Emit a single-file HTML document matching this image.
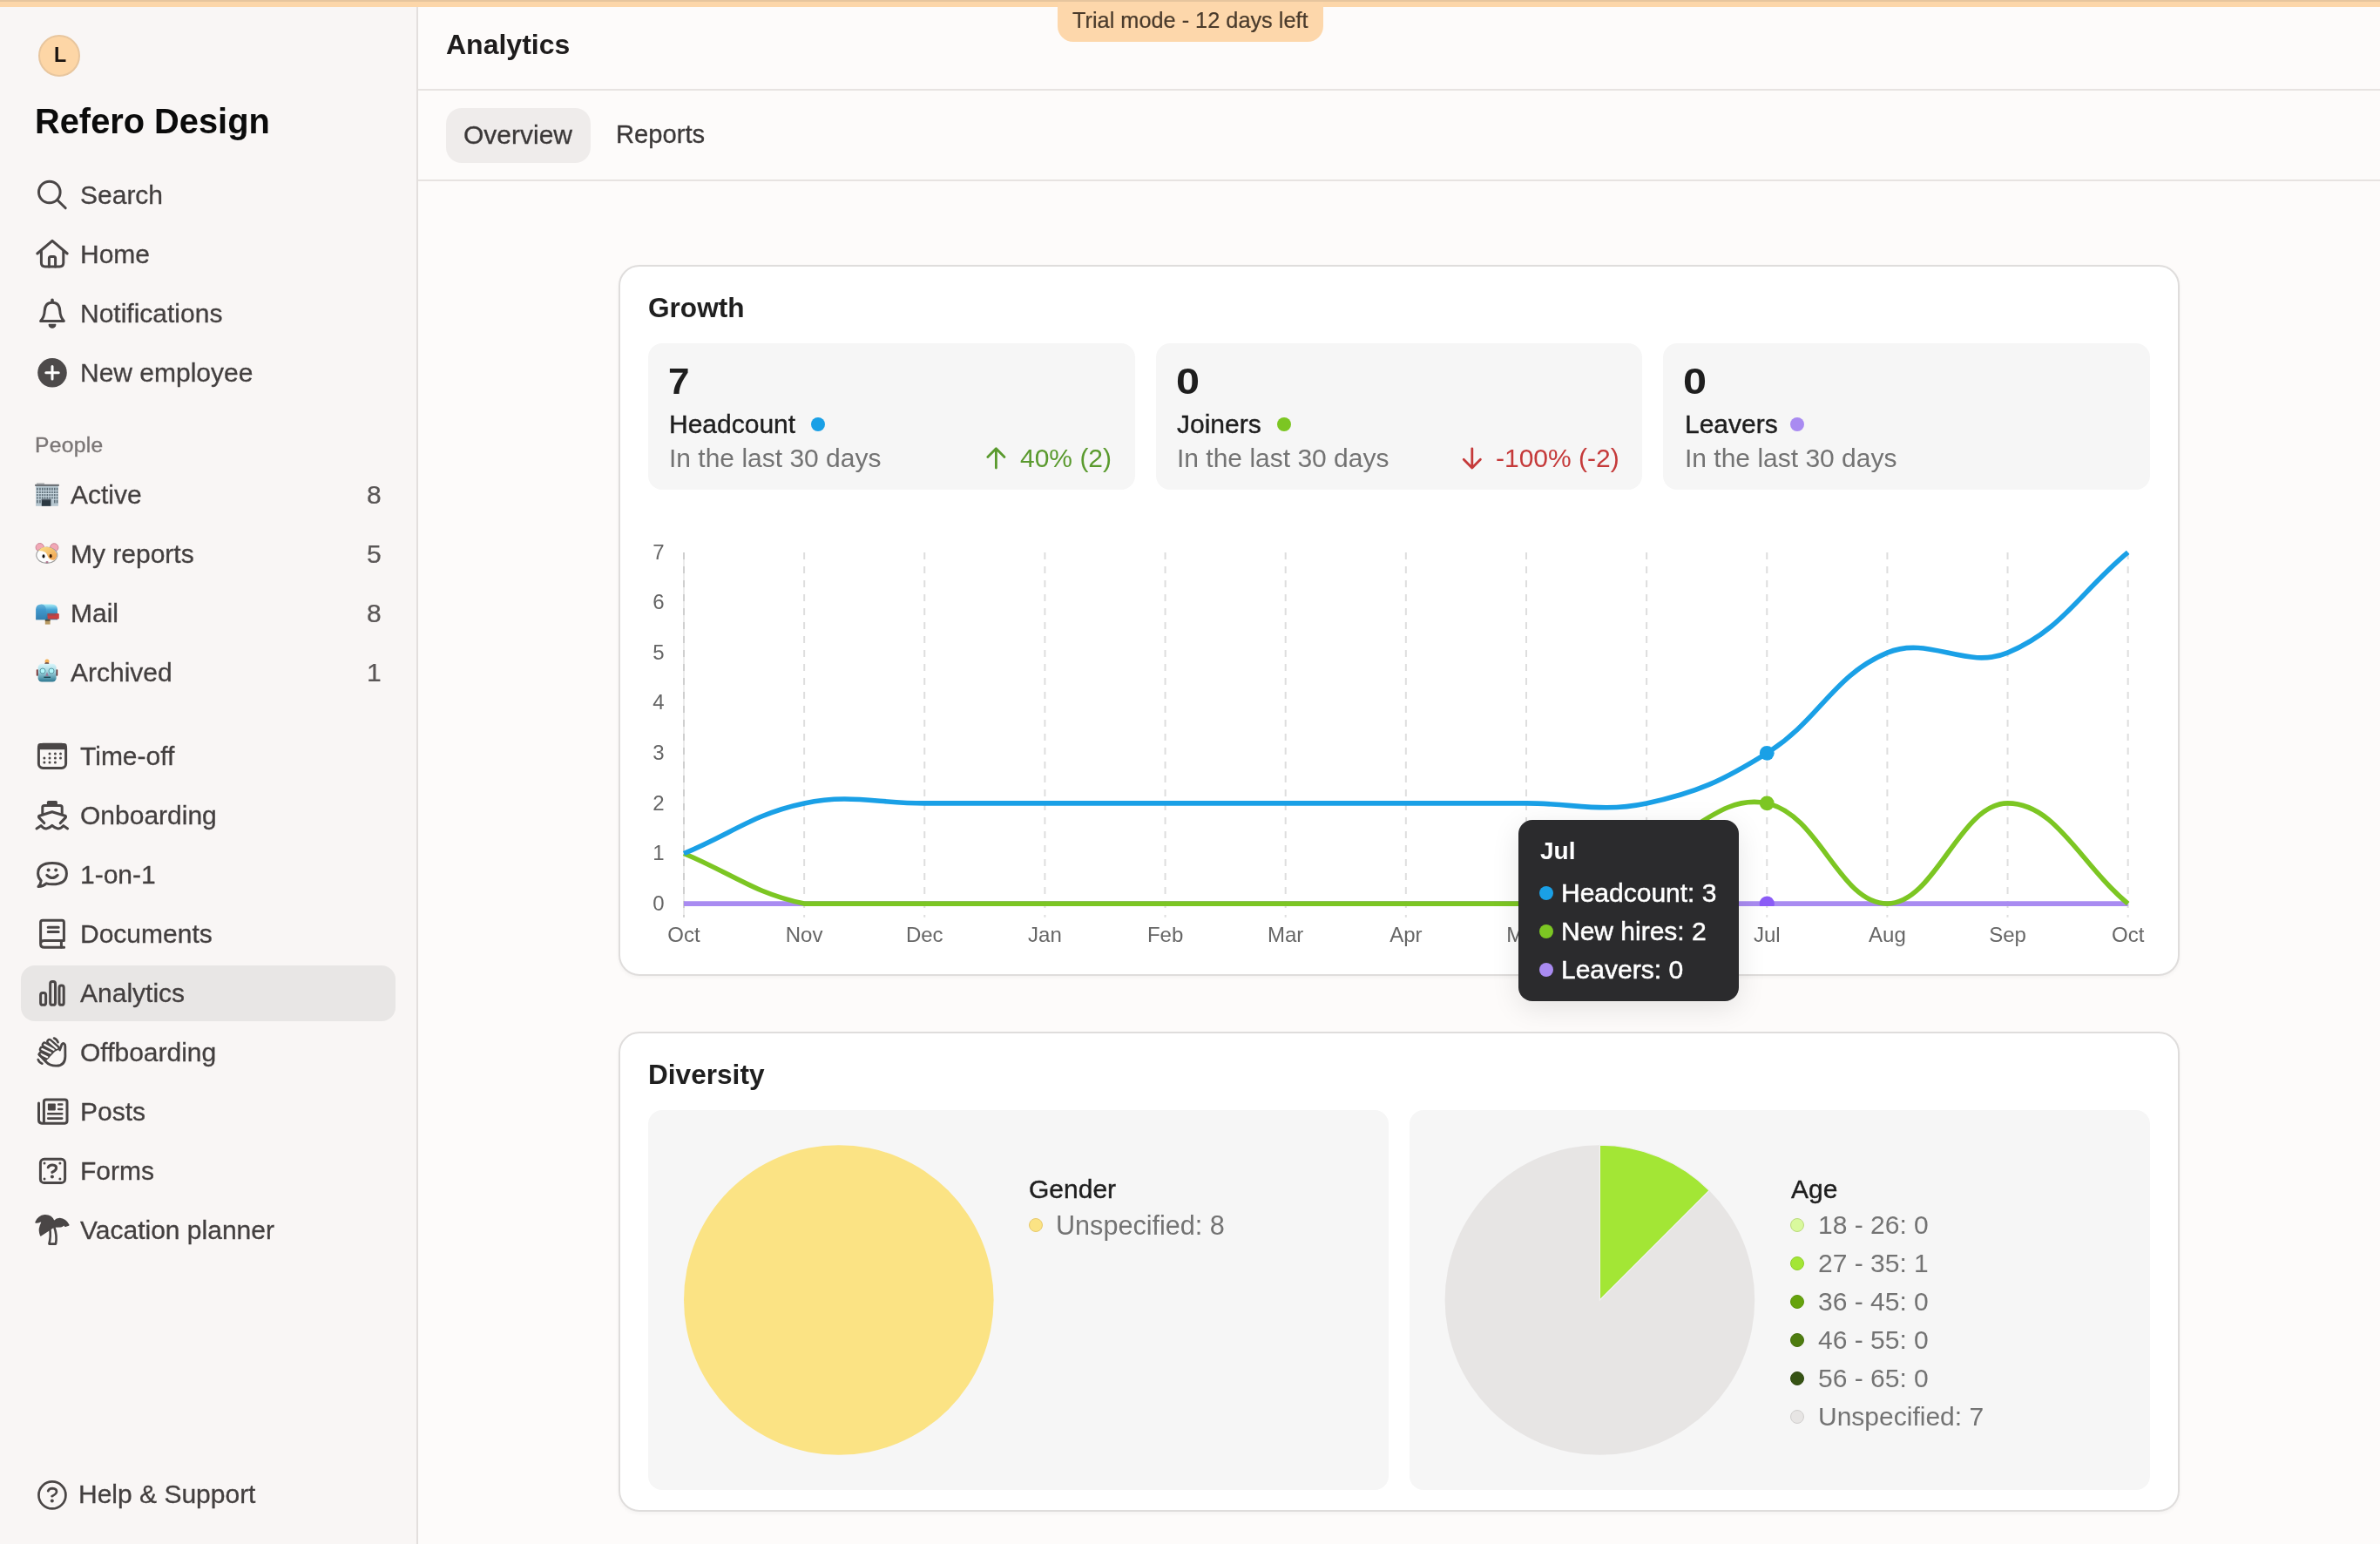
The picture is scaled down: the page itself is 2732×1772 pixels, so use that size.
<!DOCTYPE html>
<html><head><meta charset="utf-8"><title>Analytics</title>
<style>
@media (min-width:1800px){html{zoom:2;}}
*{box-sizing:border-box;margin:0;padding:0;}
body{width:1366px;height:886px;overflow:hidden;position:relative;background:#fdfbfa;font-family:"Liberation Sans", sans-serif;}
.t{position:absolute;white-space:nowrap;line-height:1;will-change:transform;}
.abs{position:absolute;}
</style></head><body>

<div class="abs" style="left:0;top:0;width:239px;height:886px;background:#f9f6f5;"></div>
<div class="abs" style="left:239px;top:0;width:1px;height:886px;background:#e3dfdd;"></div>
<div class="abs" style="left:12px;top:554px;width:215px;height:32px;background:#e8e6e5;border-radius:8px;"></div>
<div class="abs" style="left:22px;top:20px;width:24px;height:24px;border-radius:50%;background:#fdd6a6;border:1px solid #e8c69e;"></div>
<div class="t" style="left:30.90px;top:26.18px;font-size:11.6px;color:#1a1410;font-weight:700;">L</div>
<div class="t" style="left:19.80px;top:60.15px;font-size:19.9px;color:#0b0b0b;font-weight:700;">Refero Design</div>
<div class="t" style="left:45.80px;top:104.70px;font-size:15px;color:#433f3f;font-weight:400;-webkit-text-stroke:0.15px #433f3f;">Search</div>
<div class="t" style="left:45.80px;top:138.70px;font-size:15px;color:#433f3f;font-weight:400;-webkit-text-stroke:0.15px #433f3f;">Home</div>
<div class="t" style="left:45.80px;top:172.70px;font-size:15px;color:#433f3f;font-weight:400;-webkit-text-stroke:0.15px #433f3f;">Notifications</div>
<div class="t" style="left:45.80px;top:206.70px;font-size:15px;color:#433f3f;font-weight:400;-webkit-text-stroke:0.15px #433f3f;">New employee</div>
<div class="t" style="left:20.00px;top:249.34px;font-size:12.3px;color:#7b7676;font-weight:400;letter-spacing:0.15px;-webkit-text-stroke:0.2px #7b7676;">People</div>
<div class="t" style="left:40.30px;top:276.50px;font-size:15px;color:#433f3f;font-weight:400;-webkit-text-stroke:0.15px #433f3f;">Active</div>
<div class="t" style="right:1147.40px;top:276.50px;font-size:15px;color:#5a5656;font-weight:400;-webkit-text-stroke:0.12px #5a5656;">8</div>
<div class="t" style="left:40.30px;top:310.50px;font-size:15px;color:#433f3f;font-weight:400;-webkit-text-stroke:0.15px #433f3f;">My reports</div>
<div class="t" style="right:1147.40px;top:310.50px;font-size:15px;color:#5a5656;font-weight:400;-webkit-text-stroke:0.12px #5a5656;">5</div>
<div class="t" style="left:40.30px;top:344.50px;font-size:15px;color:#433f3f;font-weight:400;-webkit-text-stroke:0.15px #433f3f;">Mail</div>
<div class="t" style="right:1147.40px;top:344.50px;font-size:15px;color:#5a5656;font-weight:400;-webkit-text-stroke:0.12px #5a5656;">8</div>
<div class="t" style="left:40.30px;top:378.50px;font-size:15px;color:#433f3f;font-weight:400;-webkit-text-stroke:0.15px #433f3f;">Archived</div>
<div class="t" style="right:1147.40px;top:378.50px;font-size:15px;color:#5a5656;font-weight:400;-webkit-text-stroke:0.12px #5a5656;">1</div>
<div class="t" style="left:45.80px;top:426.60px;font-size:15px;color:#433f3f;font-weight:400;-webkit-text-stroke:0.15px #433f3f;">Time-off</div>
<div class="t" style="left:45.80px;top:460.60px;font-size:15px;color:#433f3f;font-weight:400;-webkit-text-stroke:0.15px #433f3f;">Onboarding</div>
<div class="t" style="left:45.80px;top:494.60px;font-size:15px;color:#433f3f;font-weight:400;-webkit-text-stroke:0.15px #433f3f;">1-on-1</div>
<div class="t" style="left:45.80px;top:528.60px;font-size:15px;color:#433f3f;font-weight:400;-webkit-text-stroke:0.15px #433f3f;">Documents</div>
<div class="t" style="left:45.80px;top:562.60px;font-size:15px;color:#433f3f;font-weight:400;-webkit-text-stroke:0.15px #433f3f;">Analytics</div>
<div class="t" style="left:45.80px;top:596.60px;font-size:15px;color:#433f3f;font-weight:400;-webkit-text-stroke:0.15px #433f3f;">Offboarding</div>
<div class="t" style="left:45.80px;top:630.60px;font-size:15px;color:#433f3f;font-weight:400;-webkit-text-stroke:0.15px #433f3f;">Posts</div>
<div class="t" style="left:45.80px;top:664.60px;font-size:15px;color:#433f3f;font-weight:400;-webkit-text-stroke:0.15px #433f3f;">Forms</div>
<div class="t" style="left:45.80px;top:698.60px;font-size:15px;color:#433f3f;font-weight:400;-webkit-text-stroke:0.15px #433f3f;">Vacation planner</div>
<div class="t" style="left:45.20px;top:850.20px;font-size:15px;color:#433f3f;font-weight:400;-webkit-text-stroke:0.15px #433f3f;">Help &amp; Support</div>
<svg class="abs" style="left:0;top:0" width="240" height="886" viewBox="0 0 240 886" fill="none" stroke="#4a4646" stroke-width="1.5" stroke-linecap="round" stroke-linejoin="round">
<!-- search -->
<circle cx="28.4" cy="110.25" r="6.15"/><path d="M33.0 114.9 L37.6 119.4"/>
<!-- home -->
<path d="M21.4 145.5 L30 138.2 L38.6 145.5"/>
<path d="M23.7 144.2 V150.8 Q23.7 153 25.9 153 H34.2 Q36.4 153 36.4 150.8 V144.2"/>
<path d="M28.2 153 V148.2 Q28.2 147.2 29.2 147.2 H30.8 Q31.8 147.2 31.8 148.2 V153"/>
<!-- bell -->
<path d="M23.3 184.2 Q25.5 181.8 25.6 178.5 Q25.8 173.6 30 173.6 Q34.2 173.6 34.4 178.5 Q34.5 181.8 36.7 184.2 Z"/>
<path d="M30 172.9 V172.1" stroke-width="1.8"/>
<path d="M28.1 186.2 A1.9 1.9 0 0 0 31.9 186.2 Z" fill="#4a4646" stroke-width="0.6"/>
<!-- new employee -->
<circle cx="30" cy="213.9" r="8.4" fill="#4d4a4a" stroke="none"/>
<path d="M26.4 213.9 H33.6 M30 210.3 V217.5" stroke="#fff" stroke-width="1.5"/>
<!-- time-off calendar -->
<rect x="22.2" y="427.1" width="15.6" height="13.6" rx="2.4"/>
<rect x="21.6" y="426.5" width="16.8" height="3.6" rx="1.6" fill="#4a4646" stroke="none"/>
<g fill="#4a4646" stroke="none">
<circle cx="28.5" cy="432.45" r="0.75"/><circle cx="31.7" cy="432.45" r="0.75"/><circle cx="34.75" cy="432.45" r="0.75"/>
<circle cx="25.45" cy="434.95" r="0.75"/><circle cx="28.5" cy="434.95" r="0.75"/><circle cx="31.7" cy="434.95" r="0.75"/><circle cx="34.75" cy="434.95" r="0.75"/>
<circle cx="25.45" cy="437.45" r="0.75"/><circle cx="28.5" cy="437.45" r="0.75"/><circle cx="31.7" cy="437.45" r="0.75"/>
</g>
<!-- onboarding ship -->
<rect x="26.95" y="459.5" width="6" height="3.1" rx="0.8" fill="#4a4646" stroke="none"/>
<path d="M24.4 466.8 V463.4 Q24.4 462.3 25.5 462.3 H34.5 Q35.6 462.3 35.6 463.4 V466.8"/>
<path d="M25.4 472.3 L22.4 469.2 Q21.9 468.5 22.7 468.1 L29.9 465.9 L37.3 468.1 Q38.1 468.5 37.6 469.2 L34.6 472.3"/>
<path d="M21.0 475.5 L23.6 473.8 Q25.0 475.6 26.6 475.5 Q28.3 475.3 29.9 473.7 Q31.5 475.3 33.2 475.5 Q34.9 475.6 36.4 473.8 L38.8 475.5"/>
<!-- 1-on-1 -->
<path d="M23.6 505.3 Q21.8 503.6 21.8 501.2 Q21.8 495.2 30 495.2 Q38.2 495.2 38.2 501.2 Q38.2 507.4 30 507.4 Q27.9 507.4 26.6 506.9 Q24.8 508.6 22.0 508.8 Q23.4 507.3 23.6 505.3 Z"/>
<circle cx="27.8" cy="499.3" r="1" fill="#4a4646" stroke="none"/><circle cx="32.1" cy="499.3" r="1" fill="#4a4646" stroke="none"/>
<path d="M26.9 502.2 Q30 505.4 33.1 502.2"/>
<!-- documents -->
<path d="M23.3 541.5 V529.3 Q23.3 528.1 24.5 528.1 H35.6 Q36.7 528.1 36.7 529.3 V539.7 H25.4 Q23.3 539.7 23.3 541.6 Q23.3 543.6 25.4 543.6 H36.8"/>
<path d="M35.2 539.8 V543.5"/>
<path d="M27.6 532.1 H33.6 M27.6 534.8 H33.6" stroke-width="1.5"/>
<!-- analytics bars -->
<rect x="23.3" y="569.75" width="3.0" height="6.9" rx="1.2"/>
<rect x="28.85" y="563.3" width="2.9" height="13.35" rx="1.2"/>
<rect x="34.0" y="565.55" width="2.6" height="11.1" rx="1.2"/>
<!-- offboarding hand -->
<g stroke-width="3.5">
<path d="M28.36 597.68 L32.9 601.7"/><path d="M25.61 599.46 L30.9 602.5"/><path d="M24.15 602.05 L29.1 604.3"/><path d="M23.67 604.97 L27.2 606.8"/>
</g>
<path d="M33.9 602.3 L31.6 603.4 L29.8 605.2 L27.9 607.4 L26.6 608.6 Q29.0 610.9 32.5 610.9 Q36.6 610.6 36.7 605.8 L36.6 600.2 Q36.4 599.3 35.9 599.6 L34.7 602.4 Z" fill="#f9f6f5" stroke="none"/>
<g stroke="#f9f6f5" stroke-width="1.1">
<path d="M28.36 597.68 L32.6 601.45"/><path d="M25.61 599.46 L30.8 602.4"/><path d="M24.15 602.05 L29.0 604.2"/><path d="M23.67 604.97 L27.1 606.6"/>
</g>
<path d="M34.3 602.5 L35.5 599.3 Q36.1 598.5 36.8 598.9 Q37.4 599.3 37.4 600.2 L37.45 606.1 Q37.4 611.5 32.4 611.6 Q28.6 611.7 26.2 609.1 L22.4 605.0" stroke-width="1.4"/>
<path d="M31.0 595.75 Q32.6 596.3 33.3 598.1" stroke-width="1.3"/>
<path d="M21.85 608.0 Q22.6 609.8 24.2 610.35" stroke-width="1.3"/>
<!-- posts -->
<path d="M25.2 644.0 V632.3 Q25.2 631.0 26.5 631.0 H37.2 Q38.5 631.0 38.5 632.3 V643.3 Q38.5 644.6 37.2 644.6 H24.0 Q22.25 644.6 22.25 642.8 V633.0"/>
<rect x="27.45" y="633.3" width="4.45" height="3.9" rx="0.4" fill="#4a4646" stroke="none"/>
<path d="M33.6 633.75 H35.6 M33.6 636.5 H35.6 M27.6 639.15 H35.6 M27.6 641.8 H35.6" stroke-width="1.3"/>
<!-- forms -->
<rect x="23.2" y="665.1" width="14.1" height="13.7" rx="2.2"/>
<g fill="#4a4646" stroke="none"><circle cx="25.5" cy="667.5" r="0.75"/><circle cx="34.45" cy="667.5" r="0.75"/><circle cx="25.5" cy="676.45" r="0.75"/><circle cx="34.45" cy="676.45" r="0.75"/><circle cx="29.95" cy="675.3" r="1.0"/></g>
<path d="M27.6 669.9 Q28.3 668.4 30.2 668.5 Q32.4 668.7 32.3 670.3 Q32.2 671.6 29.9 672.7"/>
<!-- vacation palm -->
<path d="M20.6 701.4 Q22.2 697.8 25.6 697.5 Q29.4 697.3 31.0 700.9 Q32.6 699.3 34.3 699.3 Q37.6 699.6 39.35 702.9 L37.45 703.6 Q37.0 702.6 36.5 702.8 Q35.8 703.6 34.9 703.8 L31.0 703.9 L23.4 708.9 Q22.3 706.0 23.2 703.6 Q23.7 702.4 24.2 701.2 Q23.6 700.6 22.9 701.0 Q21.8 701.5 20.6 701.4 Z" fill="#4a4646" stroke-width="0.9"/>
<path d="M28.6 704.4 Q29.3 709.6 28.2 713.8 H32.0 Q32.9 709.0 31.1 704.0" stroke-width="1.3"/>
<!-- help -->
<circle cx="29.97" cy="857.97" r="7.75" stroke-width="1.35"/>
<path d="M27.6 855.6 Q28.1 854.1 30.1 854.1 Q32.5 854.2 32.5 856.0 Q32.4 857.3 29.8 858.6" stroke-width="1.35"/>
<circle cx="29.9" cy="861.2" r="1.0" fill="#4a4646" stroke="none"/>
</svg>
<svg class="abs" style="left:0;top:0" width="240" height="886" viewBox="0 0 240 886">
<defs>
<linearGradient id="gmb" x1="0" y1="0" x2="0" y2="1"><stop offset="0" stop-color="#a9eef8"/><stop offset="0.35" stop-color="#49a6d6"/><stop offset="1" stop-color="#2a6f98"/></linearGradient>
<linearGradient id="grb" x1="0" y1="0" x2="0" y2="1"><stop offset="0" stop-color="#d9f7fc"/><stop offset="0.45" stop-color="#9fd3de"/><stop offset="1" stop-color="#2c7790"/></linearGradient>
<linearGradient id="gham" x1="0" y1="0" x2="1" y2="1"><stop offset="0" stop-color="#fbe08a"/><stop offset="1" stop-color="#f0a050"/></linearGradient>
</defs>
<!-- building -->
<rect x="20.55" y="278.6" width="12.9" height="11.8" fill="#b6c6cf"/>
<rect x="20.1" y="277.9" width="13.8" height="1.1" fill="#6f7377"/>
<rect x="21.0" y="277.2" width="4.5" height="0.8" fill="#a9abad"/>
<g fill="#5d6d77">
<rect x="21.1" y="279.9" width="0.75" height="8.8"/><rect x="22.6" y="279.9" width="0.75" height="8.8"/><rect x="24.0" y="279.9" width="0.75" height="6.5"/><rect x="25.4" y="279.9" width="0.75" height="6.5"/><rect x="26.8" y="279.9" width="0.75" height="6.5"/><rect x="28.2" y="279.9" width="0.75" height="6.5"/><rect x="29.6" y="279.9" width="0.75" height="6.5"/><rect x="31.0" y="279.9" width="0.75" height="8.8"/><rect x="32.4" y="279.9" width="0.75" height="8.8"/>
</g>
<g fill="#c9d8e0"><rect x="20.6" y="281.4" width="12.8" height="0.55"/><rect x="20.6" y="283.0" width="12.8" height="0.55"/><rect x="20.6" y="284.6" width="12.8" height="0.55"/><rect x="20.6" y="286.3" width="12.8" height="0.55"/></g>
<rect x="23.9" y="286.4" width="5.3" height="4.0" fill="#2b3841"/>
<rect x="23.9" y="286.4" width="5.3" height="0.7" fill="#55606a"/>
<!-- hamster -->
<circle cx="22.9" cy="314.1" r="2.35" fill="#f2a8b6" stroke="#c98595" stroke-width="0.5"/>
<circle cx="31.1" cy="314.2" r="2.35" fill="#f2a8b6" stroke="#c98595" stroke-width="0.5"/>
<ellipse cx="26.9" cy="318.6" rx="6.0" ry="4.6" fill="#fdfdfd" stroke="#9a9a9a" stroke-width="0.55"/>
<path d="M22.0 316.0 Q24.0 313.6 27.0 313.9 Q31.2 314.2 32.6 317.9 Q32.6 320.6 31.0 321.4 Q28.2 321.6 27.3 319.0 Q26.6 316.8 24.4 316.3 Z" fill="url(#gham)"/>
<ellipse cx="25.0" cy="319.2" rx="0.75" ry="1.05" fill="#111"/>
<ellipse cx="29.1" cy="319.1" rx="0.75" ry="1.05" fill="#3a1a05"/>
<ellipse cx="27.0" cy="322.6" rx="0.8" ry="0.55" fill="#b07890"/>
<!-- mailbox -->
<path d="M20.6 355.6 V349.8 Q20.6 346.7 23.8 346.7 H29.6 Q33.0 346.7 33.0 349.8 V355.6 Z" fill="url(#gmb)"/>
<path d="M20.6 355.6 V349.8 Q20.6 346.7 23.8 346.7 Q26.4 346.9 26.4 350.2 V355.6 Z" fill="#3a8dc4" opacity="0.55"/>
<rect x="27.3" y="352.0" width="6.6" height="3.2" rx="0.6" fill="#c94040"/>
<rect x="27.3" y="352.0" width="4.6" height="1.3" fill="#9a4a55"/>
<rect x="25.9" y="355.6" width="2.9" height="2.7" fill="#b99a62"/>
<rect x="25.9" y="355.6" width="2.9" height="0.7" fill="#3c3a2e"/>
<!-- robot -->
<circle cx="27.0" cy="379.5" r="1.25" fill="#f3b25a"/>
<ellipse cx="26.9" cy="380.7" rx="1.3" ry="0.6" fill="#5a3c3c"/>
<rect x="20.9" y="384.1" width="1.1" height="3.8" rx="0.4" fill="#7a2f2f"/>
<rect x="32.0" y="384.1" width="1.1" height="3.8" rx="0.4" fill="#6a2a2a"/>
<rect x="21.8" y="380.9" width="10.5" height="10.4" rx="2.2" fill="url(#grb)"/>
<circle cx="24.5" cy="385.0" r="1.5" fill="#b2f6fb" stroke="#5a9aa4" stroke-width="0.5"/>
<circle cx="29.5" cy="385.0" r="1.5" fill="#b2f6fb" stroke="#5a9aa4" stroke-width="0.5"/>
<path d="M27.0 385.6 L26.1 388.0 H27.9 Z" fill="#9a7d98"/>
<rect x="25.2" y="388.3" width="3.8" height="0.7" fill="#1f4a55"/>
</svg>
<div class="abs" style="left:240px;top:51px;width:1126px;height:1px;background:#e7e3e1;"></div>
<div class="abs" style="left:240px;top:103px;width:1126px;height:1px;background:#e7e3e1;"></div>
<div class="t" style="left:256.00px;top:17.36px;font-size:16px;color:#1e1c1c;font-weight:700;">Analytics</div>
<div class="abs" style="left:256px;top:61.8px;width:83.2px;height:31.5px;background:#efeceb;border-radius:9px;"></div>
<div class="t" style="left:266.00px;top:69.80px;font-size:15px;color:#3b3838;font-weight:400;-webkit-text-stroke:0.15px #3b3838;">Overview</div>
<div class="t" style="left:353.60px;top:70.14px;font-size:14.6px;color:#3b3838;font-weight:400;-webkit-text-stroke:0.15px #3b3838;">Reports</div>
<div class="abs" style="left:0;top:0;width:1366px;height:4px;background:#fcd6a9;border-top:1px solid #e6c59e;"></div>
<div class="abs" style="left:606.8px;top:0;width:152.7px;height:24px;background:#fdd7ab;border-radius:0 0 9px 9px;"></div>
<div class="abs" style="left:0;top:0;width:1366px;height:1px;background:#e6c59e;"></div>
<div class="t" style="left:615.30px;top:5.33px;font-size:12.66px;color:#4a3b2c;font-weight:400;-webkit-text-stroke:0.12px #4a3b2c;">Trial mode - 12 days left</div>
<div class="abs" style="left:355px;top:151.8px;width:896px;height:408.4px;background:#fff;border:1px solid #dfdddc;border-radius:12px;box-shadow:0 1px 2px rgba(0,0,0,0.04);"></div>
<div class="t" style="left:372.20px;top:169.03px;font-size:15.8px;color:#1f1f1f;font-weight:700;">Growth</div>
<div class="abs" style="left:372.00px;top:197.2px;width:279.33px;height:84px;background:#f6f6f6;border-radius:8px;"></div>
<div class="t" style="left:383.50px;top:208.39px;font-size:20.8px;color:#1e1e1e;font-weight:700;transform:scaleX(1.06);transform-origin:0 0;">7</div>
<div class="t" style="left:384.20px;top:235.80px;font-size:15px;color:#1e1e1e;-webkit-text-stroke:0.2px #1e1e1e;">Headcount</div>
<div class="abs" style="left:465.50px;top:239.6px;width:8px;height:8px;border-radius:50%;background:#1aa0e6;"></div>
<div class="t" style="left:384.20px;top:255.30px;font-size:15px;color:#737373;font-weight:400;">In the last 30 days</div>
<div class="t" style="right:728.07px;top:255.30px;font-size:15px;color:#5a9a2e;font-weight:400;">40% (2)</div>
<div class="abs" style="left:663.33px;top:197.2px;width:279.33px;height:84px;background:#f6f6f6;border-radius:8px;"></div>
<div class="t" style="left:674.83px;top:208.39px;font-size:20.8px;color:#1e1e1e;font-weight:700;transform:scaleX(1.17);transform-origin:0 0;">0</div>
<div class="t" style="left:675.53px;top:235.80px;font-size:15px;color:#1e1e1e;-webkit-text-stroke:0.2px #1e1e1e;">Joiners</div>
<div class="abs" style="left:733.00px;top:239.6px;width:8px;height:8px;border-radius:50%;background:#7cc623;"></div>
<div class="t" style="left:675.53px;top:255.30px;font-size:15px;color:#737373;font-weight:400;">In the last 30 days</div>
<div class="t" style="right:436.73px;top:255.30px;font-size:15px;color:#c53a3a;font-weight:400;">-100% (-2)</div>
<div class="abs" style="left:954.67px;top:197.2px;width:279.33px;height:84px;background:#f6f6f6;border-radius:8px;"></div>
<div class="t" style="left:966.17px;top:208.39px;font-size:20.8px;color:#1e1e1e;font-weight:700;transform:scaleX(1.17);transform-origin:0 0;">0</div>
<div class="t" style="left:966.87px;top:235.80px;font-size:15px;color:#1e1e1e;-webkit-text-stroke:0.2px #1e1e1e;">Leavers</div>
<div class="abs" style="left:1027.40px;top:239.6px;width:8px;height:8px;border-radius:50%;background:#a98bf1;"></div>
<div class="t" style="left:966.87px;top:255.30px;font-size:15px;color:#737373;font-weight:400;">In the last 30 days</div>
<svg class="abs" style="left:0;top:0" width="1366" height="886" viewBox="0 0 1366 886" fill="none" stroke-linecap="round" stroke-linejoin="round"><path d="M571.7 268.5 V257.6 M566.9 262.3 L571.7 257.4 L576.5 262.3" stroke="#5a9a2e" stroke-width="1.4"/><path d="M844.9 257.4 V268.3 M840.1 263.6 L844.9 268.5 L849.7 263.6" stroke="#c53a3a" stroke-width="1.4"/></svg>
<svg class="abs" style="left:0;top:0" width="1366" height="886" viewBox="0 0 1366 886"><line x1="392.50" y1="317" x2="392.50" y2="526.4" stroke="#ebebeb" stroke-width="1"/><line x1="392.50" y1="317" x2="392.50" y2="526.4" stroke="#cfcfcf" stroke-width="1" stroke-dasharray="4 4"/><line x1="461.57" y1="317" x2="461.57" y2="526.4" stroke="#dedede" stroke-width="1" stroke-dasharray="4 4"/><line x1="530.64" y1="317" x2="530.64" y2="526.4" stroke="#dedede" stroke-width="1" stroke-dasharray="4 4"/><line x1="599.71" y1="317" x2="599.71" y2="526.4" stroke="#dedede" stroke-width="1" stroke-dasharray="4 4"/><line x1="668.78" y1="317" x2="668.78" y2="526.4" stroke="#dedede" stroke-width="1" stroke-dasharray="4 4"/><line x1="737.85" y1="317" x2="737.85" y2="526.4" stroke="#dedede" stroke-width="1" stroke-dasharray="4 4"/><line x1="806.92" y1="317" x2="806.92" y2="526.4" stroke="#dedede" stroke-width="1" stroke-dasharray="4 4"/><line x1="875.99" y1="317" x2="875.99" y2="526.4" stroke="#dedede" stroke-width="1" stroke-dasharray="4 4"/><line x1="945.06" y1="317" x2="945.06" y2="526.4" stroke="#dedede" stroke-width="1" stroke-dasharray="4 4"/><line x1="1014.13" y1="317" x2="1014.13" y2="526.4" stroke="#dedede" stroke-width="1" stroke-dasharray="4 4"/><line x1="1083.20" y1="317" x2="1083.20" y2="526.4" stroke="#dedede" stroke-width="1" stroke-dasharray="4 4"/><line x1="1152.27" y1="317" x2="1152.27" y2="526.4" stroke="#dedede" stroke-width="1" stroke-dasharray="4 4"/><line x1="1221.34" y1="317" x2="1221.34" y2="526.4" stroke="#dedede" stroke-width="1" stroke-dasharray="4 4"/><text x="381.3" y="522.40" text-anchor="end" font-size="12" fill="#666" font-family='"Liberation Sans", sans-serif'>0</text><text x="381.3" y="493.60" text-anchor="end" font-size="12" fill="#666" font-family='"Liberation Sans", sans-serif'>1</text><text x="381.3" y="464.80" text-anchor="end" font-size="12" fill="#666" font-family='"Liberation Sans", sans-serif'>2</text><text x="381.3" y="436.00" text-anchor="end" font-size="12" fill="#666" font-family='"Liberation Sans", sans-serif'>3</text><text x="381.3" y="407.20" text-anchor="end" font-size="12" fill="#666" font-family='"Liberation Sans", sans-serif'>4</text><text x="381.3" y="378.40" text-anchor="end" font-size="12" fill="#666" font-family='"Liberation Sans", sans-serif'>5</text><text x="381.3" y="349.60" text-anchor="end" font-size="12" fill="#666" font-family='"Liberation Sans", sans-serif'>6</text><text x="381.3" y="320.80" text-anchor="end" font-size="12" fill="#666" font-family='"Liberation Sans", sans-serif'>7</text><text x="392.50" y="540.4" text-anchor="middle" font-size="12" fill="#666" font-family='"Liberation Sans", sans-serif'>Oct</text><text x="461.57" y="540.4" text-anchor="middle" font-size="12" fill="#666" font-family='"Liberation Sans", sans-serif'>Nov</text><text x="530.64" y="540.4" text-anchor="middle" font-size="12" fill="#666" font-family='"Liberation Sans", sans-serif'>Dec</text><text x="599.71" y="540.4" text-anchor="middle" font-size="12" fill="#666" font-family='"Liberation Sans", sans-serif'>Jan</text><text x="668.78" y="540.4" text-anchor="middle" font-size="12" fill="#666" font-family='"Liberation Sans", sans-serif'>Feb</text><text x="737.85" y="540.4" text-anchor="middle" font-size="12" fill="#666" font-family='"Liberation Sans", sans-serif'>Mar</text><text x="806.92" y="540.4" text-anchor="middle" font-size="12" fill="#666" font-family='"Liberation Sans", sans-serif'>Apr</text><text x="875.99" y="540.4" text-anchor="middle" font-size="12" fill="#666" font-family='"Liberation Sans", sans-serif'>May</text><text x="945.06" y="540.4" text-anchor="middle" font-size="12" fill="#666" font-family='"Liberation Sans", sans-serif'>Jun</text><text x="1014.13" y="540.4" text-anchor="middle" font-size="12" fill="#666" font-family='"Liberation Sans", sans-serif'>Jul</text><text x="1083.20" y="540.4" text-anchor="middle" font-size="12" fill="#666" font-family='"Liberation Sans", sans-serif'>Aug</text><text x="1152.27" y="540.4" text-anchor="middle" font-size="12" fill="#666" font-family='"Liberation Sans", sans-serif'>Sep</text><text x="1221.34" y="540.4" text-anchor="middle" font-size="12" fill="#666" font-family='"Liberation Sans", sans-serif'>Oct</text><path d="M392.50,518.55 H1221.34" stroke="#a98bf1" stroke-width="2.8" fill="none"/><path d="M392.50,489.75C420.13,501.27 432.84,512.56 461.57,518.55C488.09,518.55 503.01,518.55 530.64,518.55C558.27,518.55 572.08,518.55 599.71,518.55C627.34,518.55 641.15,518.55 668.78,518.55C696.41,518.55 710.22,518.55 737.85,518.55C765.48,518.55 779.29,518.55 806.92,518.55C834.55,518.55 849.47,518.55 875.99,518.55C904.72,512.56 917.43,501.27 945.06,489.75C972.69,478.23 989.03,455.72 1014.13,460.95C1044.29,467.24 1055.57,518.55 1083.20,518.55C1110.83,518.55 1124.64,460.95 1152.27,460.95C1179.90,460.95 1193.71,495.51 1221.34,518.55" stroke="#7cc623" stroke-width="2.8" fill="none"/><path d="M392.50,489.75C420.13,478.23 432.84,466.94 461.57,460.95C488.09,455.42 503.01,460.95 530.64,460.95C558.27,460.95 572.08,460.95 599.71,460.95C627.34,460.95 641.15,460.95 668.78,460.95C696.41,460.95 710.22,460.95 737.85,460.95C765.48,460.95 779.29,460.95 806.92,460.95C834.55,460.95 848.36,460.95 875.99,460.95C903.62,460.95 918.54,466.48 945.06,460.95C973.79,454.96 989.03,447.85 1014.13,432.15C1044.29,413.29 1051.95,387.58 1083.20,374.55C1107.20,364.54 1128.27,384.56 1152.27,374.55C1183.52,361.52 1193.71,339.99 1221.34,316.95" stroke="#1aa0e6" stroke-width="2.8" fill="none"/><clipPath id="cp"><rect x="380" y="300" width="900" height="219.95"/></clipPath><circle cx="1014.13" cy="518.55" r="4.3" fill="#8b5cf6" clip-path="url(#cp)"/><circle cx="1014.13" cy="460.95" r="4.2" fill="#7cc623"/><circle cx="1014.13" cy="432.15" r="4.2" fill="#1aa0e6"/></svg>
<div class="abs" style="left:871.6px;top:470.7px;width:126.4px;height:103.7px;background:#2b2b2d;border-radius:8px;box-shadow:0 4px 16px rgba(0,0,0,0.10);"></div>
<div class="t" style="left:884.00px;top:481.65px;font-size:14px;color:#fff;font-weight:700;">Jul</div>
<div class="abs" style="left:883.5px;top:508.50px;width:8px;height:8px;border-radius:50%;background:#1aa0e6;"></div>
<div class="t" style="left:895.80px;top:504.80px;font-size:15px;color:#fff;font-weight:400;-webkit-text-stroke:0.25px #fff;">Headcount: 3</div>
<div class="abs" style="left:883.5px;top:530.50px;width:8px;height:8px;border-radius:50%;background:#7cc623;"></div>
<div class="t" style="left:895.80px;top:526.80px;font-size:15px;color:#fff;font-weight:400;-webkit-text-stroke:0.25px #fff;">New hires: 2</div>
<div class="abs" style="left:883.5px;top:552.50px;width:8px;height:8px;border-radius:50%;background:#a98bf1;"></div>
<div class="t" style="left:895.80px;top:548.80px;font-size:15px;color:#fff;font-weight:400;-webkit-text-stroke:0.25px #fff;">Leavers: 0</div>
<div class="abs" style="left:355px;top:592.0px;width:896px;height:275.5px;background:#fff;border:1px solid #dfdddc;border-radius:12px;box-shadow:0 1px 2px rgba(0,0,0,0.04);"></div>
<div class="t" style="left:372.20px;top:609.03px;font-size:15.8px;color:#1f1f1f;font-weight:700;">Diversity</div>
<div class="abs" style="left:372.00px;top:636.8px;width:425.00px;height:218.2px;background:#f6f6f6;border-radius:8px;"></div>
<div class="abs" style="left:809.00px;top:636.8px;width:425.00px;height:218.2px;background:#f6f6f6;border-radius:8px;"></div>
<svg class="abs" style="left:0;top:0" width="1366" height="886" viewBox="0 0 1366 886"><circle cx="481.4" cy="746.0" r="88.9" fill="#fbe384"/><circle cx="918.2" cy="746.0" r="88.9" fill="#e7e5e4"/><path d="M918.2,746.0 L918.2,657.1 A88.9,88.9 0 0 1 981.06,683.14 Z" fill="#a3e635" stroke="#f1f1f1" stroke-width="0.6"/></svg>
<div class="t" style="left:590.50px;top:675.20px;font-size:15px;color:#1e1e1e;font-weight:400;-webkit-text-stroke:0.2px #1e1e1e;">Gender</div>
<div class="abs" style="left:590.6px;top:699px;width:8px;height:8px;border-radius:50%;background:#fbe384;border:0.5px solid #e6c86a;"></div>
<div class="t" style="left:606.20px;top:695.25px;font-size:15.3px;color:#737373;font-weight:400;">Unspecified: 8</div>
<div class="t" style="left:1027.80px;top:675.20px;font-size:15px;color:#1e1e1e;font-weight:400;-webkit-text-stroke:0.2px #1e1e1e;">Age</div>
<div class="abs" style="left:1027.6px;top:699.00px;width:8px;height:8px;border-radius:50%;background:#d9f99d;border:0.5px solid #b9d97a;"></div>
<div class="t" style="left:1043.70px;top:695.50px;font-size:15px;color:#737373;font-weight:400;">18 - 26: 0</div>
<div class="abs" style="left:1027.6px;top:721.00px;width:8px;height:8px;border-radius:50%;background:#a3e635;border:0.5px solid #8dcc2a;"></div>
<div class="t" style="left:1043.70px;top:717.50px;font-size:15px;color:#737373;font-weight:400;">27 - 35: 1</div>
<div class="abs" style="left:1027.6px;top:743.00px;width:8px;height:8px;border-radius:50%;background:#65a30d;border:0.5px solid #5a920c;"></div>
<div class="t" style="left:1043.70px;top:739.50px;font-size:15px;color:#737373;font-weight:400;">36 - 45: 0</div>
<div class="abs" style="left:1027.6px;top:765.00px;width:8px;height:8px;border-radius:50%;background:#4d7c0f;border:0.5px solid #446e0d;"></div>
<div class="t" style="left:1043.70px;top:761.50px;font-size:15px;color:#737373;font-weight:400;">46 - 55: 0</div>
<div class="abs" style="left:1027.6px;top:787.00px;width:8px;height:8px;border-radius:50%;background:#365314;border:0.5px solid #2f4811;"></div>
<div class="t" style="left:1043.70px;top:783.50px;font-size:15px;color:#737373;font-weight:400;">56 - 65: 0</div>
<div class="abs" style="left:1027.6px;top:809.00px;width:8px;height:8px;border-radius:50%;background:#e7e5e4;border:0.5px solid #cfcdcc;"></div>
<div class="t" style="left:1043.70px;top:805.50px;font-size:15px;color:#737373;font-weight:400;">Unspecified: 7</div>
</body></html>
